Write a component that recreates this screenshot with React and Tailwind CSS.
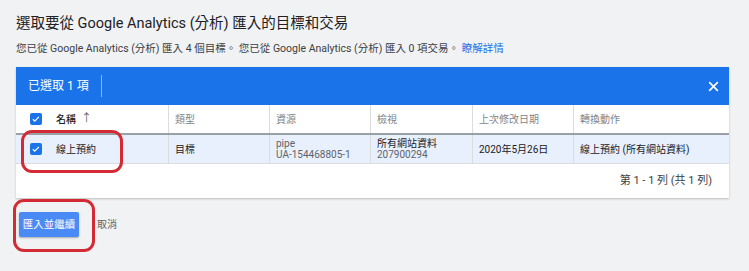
import React from "react";

const font = { fontFamily: 'Roboto, "Noto Sans CJK TC", sans-serif' };

const Check = () => (
  <span className="flex h-[12px] w-[12px] items-center justify-center rounded-[2px] bg-[#1a73e8]">
    <svg width="10" height="10" viewBox="0 0 24 24" fill="none">
      <path d="M4.5 12.5l4.5 4.5 10-10" stroke="#fff" strokeWidth="3" />
    </svg>
  </span>
);

const App = () => {
  const cols = "grid grid-cols-[152px_101px_101px_102px_101px_1fr]";
  const cell = "border-l border-[#dadce0] pl-[6px] flex flex-col justify-center";

  return (
    <div
      className="relative w-[749px] h-[271px] overflow-hidden bg-[#f1f2f4] px-4 pt-[14px]"
      style={font}
    >
      <h1 className="text-[14.5px] leading-[20px] text-[#202124]">
        選取要從 Google Analytics (分析) 匯入的目標和交易
      </h1>
      <p className="mt-[7px] text-[10.5px] leading-[16px] text-[#3c4043]">
        您已從 Google Analytics (分析) 匯入 4 個目標。 您已從 Google Analytics (分析) 匯入 0 項交易。{" "}
        <span className="text-[#1a73e8]">瞭解詳情</span>
      </p>

      {/* table card */}
      <div className="mt-[10px] w-[713px] bg-white shadow-[0_1px_2px_rgba(60,64,67,0.3)]">
        <div className="flex h-[38px] items-center bg-[#1a73e8] pl-[12px] pr-[9px] text-white">
          <span className="text-[12px]">已選取 1 項</span>
          <span className="ml-[12px] h-[22px] w-px bg-white/50" />
          <svg className="ml-auto" width="13" height="13" viewBox="0 0 24 24">
            <path d="M4 4l16 16M20 4L4 20" stroke="#fff" strokeWidth="3" />
          </svg>
        </div>

        <div className={`${cols} h-[30px] border-b-2 border-[#9aa0a6] text-[10px] text-[#80868b]`}>
          <div className="flex items-center pl-[14px]">
            <Check />
            <span className="ml-[14px] font-medium text-[#202124]">名稱</span>
            <span className="ml-[5px] text-[11px] text-[#5f6368]">↑</span>
          </div>
          <div className={cell}>類型</div>
          <div className={cell}>資源</div>
          <div className={cell}>檢視</div>
          <div className={cell}>上次修改日期</div>
          <div className={cell}>轉換動作</div>
        </div>

        <div className={`${cols} h-[29px] border-b border-[#dadce0] bg-[#e8f0fe] text-[10px] leading-[11px] text-[#202124]`}>
          <div className="flex items-center pl-[14px]">
            <Check />
            <span className="ml-[14px]">線上預約</span>
          </div>
          <div className={cell}>目標</div>
          <div className={`${cell} text-[#5f6368]`}>
            <span>pipe</span>
            <span>UA-154468805-1</span>
          </div>
          <div className={cell}>
            <span>所有網站資料</span>
            <span className="text-[#5f6368]">207900294</span>
          </div>
          <div className={cell}>2020年5月26日</div>
          <div className={cell}>線上預約 (所有網站資料)</div>
        </div>

        <div className="flex h-[34px] items-center justify-end pr-[17px] text-[11px] text-[#3c4043]">
          第 1 - 1 列 (共 1 列)
        </div>
      </div>

      <div className="mt-[14px] ml-[3px] flex items-center">
        <button className="h-[25px] w-[60px] rounded-[2px] bg-[#4a8af4] text-[10.5px] text-white shadow-[0_1px_2px_rgba(0,0,0,0.3)]">
          匯入並繼續
        </button>
        <span className="ml-[18px] text-[10px] text-[#5f6368]">取消</span>
      </div>

      {/* red annotations */}
      <div className="absolute left-[21px] top-[130px] h-[43px] w-[102px] rounded-[11px] border-[3px] border-[#d42a33]" />
      <div className="absolute left-[13px] top-[199px] h-[53px] w-[82px] rounded-[11px] border-[3px] border-[#d42a33]" />
    </div>
  );
};

export default App;
